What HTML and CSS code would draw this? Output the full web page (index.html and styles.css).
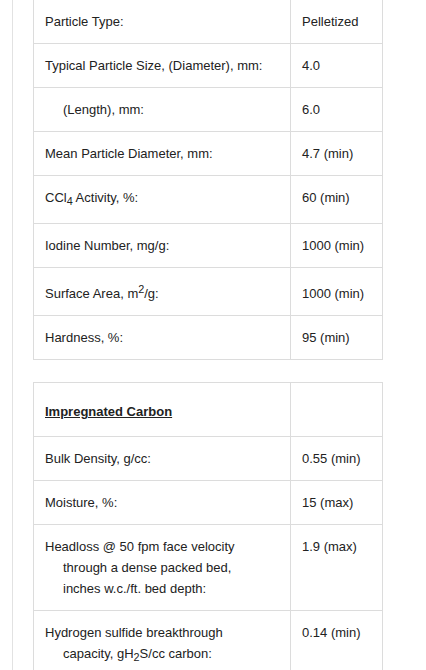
FILE: index.html
```html
<!DOCTYPE html>
<html>
<head>
<meta charset="utf-8">
<link rel="stylesheet" href="styles.css">
</head>
<body>
<div class="page">
  <table class="spec spec-first">
    <tr><td class="k">Particle Type:</td><td class="v">Pelletized</td></tr>
    <tr><td class="k">Typical Particle Size, (Diameter), mm:</td><td class="v">4.0</td></tr>
    <tr><td class="k"><span class="indent">(Length), mm:</span></td><td class="v">6.0</td></tr>
    <tr><td class="k">Mean Particle Diameter, mm:</td><td class="v">4.7 (min)</td></tr>
    <tr><td class="k">CCl<sub>4</sub> Activity, %:</td><td class="v">60 (min)</td></tr>
    <tr><td class="k">Iodine Number, mg/g:</td><td class="v">1000 (min)</td></tr>
    <tr><td class="k">Surface Area, m<sup>2</sup>/g:</td><td class="v">1000 (min)</td></tr>
    <tr><td class="k">Hardness, %:</td><td class="v">95 (min)</td></tr>
  </table>
  <table class="spec">
    <tr><td class="k head"><strong class="title">Impregnated Carbon</strong></td><td class="v head"></td></tr>
    <tr><td class="k">Bulk Density, g/cc:</td><td class="v">0.55 (min)</td></tr>
    <tr><td class="k">Moisture, %:</td><td class="v">15 (max)</td></tr>
    <tr><td class="k"><div class="hang">Headloss @ 50 fpm face velocity<br>through a dense packed bed,<br>inches w.c./ft. bed depth:</div></td><td class="v">1.9 (max)</td></tr>
    <tr><td class="k"><div class="hang">Hydrogen sulfide breakthrough<br>capacity, gH<sub>2</sub>S/cc carbon:</div></td><td class="v">0.14 (min)</td></tr>
  </table>
</div>
</body>
</html>
```
FILE: styles.css
```css
html, body {
  margin: 0;
  padding: 0;
  background: #fff;
}
body {
  font-family: "Liberation Sans", Arial, sans-serif;
  font-size: 13px;
  color: #222;
}
.page {
  margin-left: 12px;
  border-left: 1px solid #e2e2e2;
  padding-left: 20px;
  min-height: 700px;
  overflow: hidden;
}
.spec {
  border-collapse: separate;
  border-spacing: 0;
  border-top: 1px solid #dcdcdc;
  border-left: 1px solid #dcdcdc;
  width: 350px;
  table-layout: fixed;
  margin: 0 0 22px 0;
}
.spec-first {
  margin-top: -1px;
}
.spec td {
  border-right: 1px solid #dcdcdc;
  border-bottom: 1px solid #dcdcdc;
  padding: 11px 11px;
  line-height: 21px;
  vertical-align: baseline;
  text-align: left;
}
.spec td.k {
  width: 234px;
}
.spec td.v {
  width: 69px;
}
.spec td.head {
  padding-top: 18px;
  padding-bottom: 14px;
}
.spec sub {
  vertical-align: -3px;
}
.title {
  text-decoration: underline;
  font-weight: bold;
}
.indent {
  padding-left: 18px;
}
.hang {
  padding-left: 18px;
  text-indent: -18px;
}
```
